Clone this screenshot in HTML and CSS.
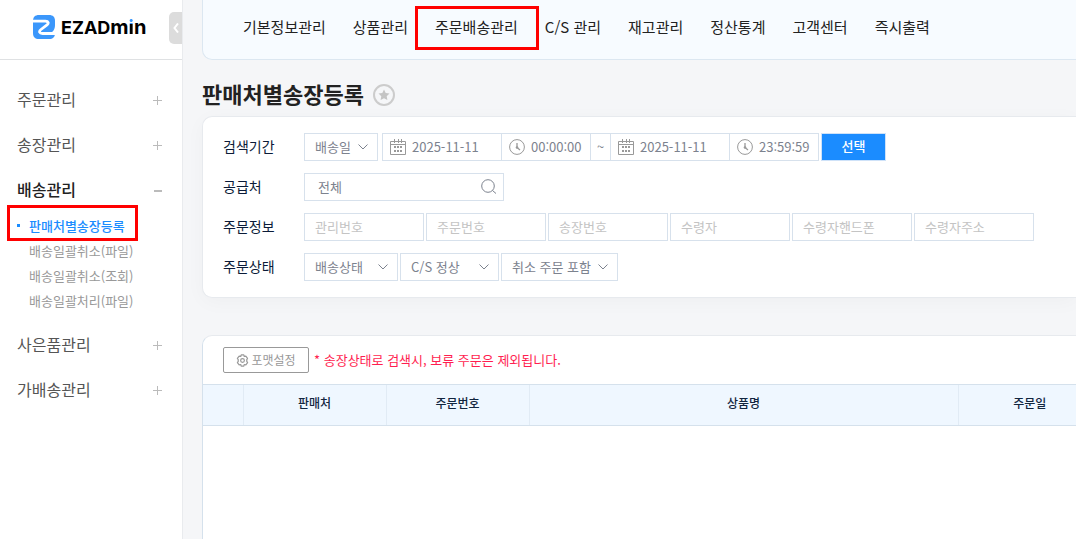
FILE: index.html
```html
<!DOCTYPE html>
<html lang="ko">
<head>
<meta charset="utf-8">
<meta name="viewport" content="width=device-width, initial-scale=1">
<title>판매처별송장등록 - EZADMIN</title>
<link rel="stylesheet" href="styles.css">
</head>
<body>
<svg class="sprite" aria-hidden="true">
  <symbol id="chevron" viewBox="0 0 10 6"><path d="M.5 .5 5 5 9.500 .5" fill="none" stroke="currentColor"/></symbol>
  <symbol id="calendar" viewBox="0 0 16 16">
    <path d="M.5 2.500h15v13H.5zM.5 5.500h15M4.500 0v4M8.500 0v4M11.500 0v4" fill="none" stroke="currentColor"/>
    <path d="M4 7h2v2H4zM7 7h2v2H7zM10 7h2v2h-2zM4 11h2v2H4zM7 11h2v2H7zM10 11h2v2h-2z" fill="currentColor"/>
  </symbol>
  <symbol id="clock" viewBox="0 0 16 16">
    <circle cx="8" cy="8" r="7.400" fill="none" stroke="currentColor"/>
    <path d="M8 4v4.500l3 2.500" fill="none" stroke="currentColor" stroke-width="1.300"/><circle cx="8" cy="8.500" r="1.300" fill="currentColor"/>
  </symbol>
</svg>
<div class="shell">
  <aside class="sidebar">
    <div class="brand">
      <a class="logo" href="#">
        <svg class="logo-mark" viewBox="0 0 22 24" aria-hidden="true">
          <path d="M6 0h10c4 0 6 2 6 6v4c0 4-2 8-6 8h6c0 4-2 6-6 6H6c-4 0-6-2-6-6V6c0-4 2-6 6-6z" fill="#3b97fb"/>
          <path d="M-1 6.200h13.500c3 0 3.500 2 1.500 3.700L8 14.500c-2.500 2-1.500 4 1.500 4H23" fill="none" stroke="#fff" stroke-width="2.800"/>
        </svg>
        <span class="logo-text">EZAD<span class="logo-small">m<span class="logo-dot">i</span>n</span></span>
      </a>
      <button class="collapse" type="button" aria-label="메뉴 접기">
        <svg viewBox="0 0 6 10" aria-hidden="true"><path d="M5 .5 1.500 5 5 9.500" fill="none" stroke="#fff" stroke-width="2"/></svg>
      </button>
    </div>
    <nav aria-label="사이드 메뉴">
      <ul class="menu">
        <li><a class="menu-link" href="#">주문관리<span class="sign"></span></a></li>
        <li><a class="menu-link" href="#">송장관리<span class="sign"></span></a></li>
        <li><a class="menu-link open" href="#">배송관리<span class="sign"></span></a>
          <ul class="submenu">
            <li class="current"><a href="#">판매처별송장등록</a></li>
            <li><a href="#">배송일괄취소(파일)</a></li>
            <li><a href="#">배송일괄취소(조회)</a></li>
            <li><a href="#">배송일괄처리(파일)</a></li>
          </ul>
        </li>
        <li><a class="menu-link" href="#">사은품관리<span class="sign"></span></a></li>
        <li><a class="menu-link" href="#">가배송관리<span class="sign"></span></a></li>
      </ul>
    </nav>
  </aside>
  <div class="content">
    <nav class="topnav" aria-label="주 메뉴">
      <a href="#">기본정보관리</a>
      <a href="#">상품관리</a>
      <a class="marked" href="#">주문배송관리</a>
      <a href="#">C/S 관리</a>
      <a href="#">재고관리</a>
      <a href="#">정산통계</a>
      <a href="#">고객센터</a>
      <a href="#">즉시출력</a>
    </nav>
    <main class="page">
      <div class="heading">
        <h1>판매처별송장등록</h1>
        <button class="star" type="button" aria-label="즐겨찾기">
          <svg viewBox="0 0 22 22" aria-hidden="true">
            <circle cx="11" cy="11" r="10" fill="none" stroke="#ccc" stroke-width="2"/>
            <path d="m11 5.500 1.700 3.500 3.800.5-2.800 2.700.7 3.900-3.400-1.900-3.400 1.900.7-3.900-2.800-2.700 3.800-.5z" fill="#c4c4c4"/>
          </svg>
        </button>
      </div>
      <form class="card search">
        <div class="row">
          <label class="row-label" for="date-type">검색기간</label>
          <div class="period">
            <span class="select select-s"><select id="date-type"><option>배송일</option></select><svg aria-hidden="true"><use href="#chevron"/></svg></span>
            <div class="range">
              <label class="stamp date"><svg aria-hidden="true"><use href="#calendar"/></svg><input type="text" value="2025-11-11" aria-label="시작일"></label>
              <label class="stamp time"><svg aria-hidden="true"><use href="#clock"/></svg><input type="text" value="00:00:00" aria-label="시작 시각"></label>
              <span class="tilde">~</span>
              <label class="stamp date"><svg aria-hidden="true"><use href="#calendar"/></svg><input type="text" value="2025-11-11" aria-label="종료일"></label>
              <label class="stamp time"><svg aria-hidden="true"><use href="#clock"/></svg><input type="text" value="23:59:59" aria-label="종료 시각"></label>
            </div>
            <button class="choose" type="button">선택</button>
          </div>
        </div>
        <div class="row">
          <label class="row-label" for="supplier">공급처</label>
          <div class="supplier">
            <input id="supplier" type="text" value="전체">
            <button type="button" aria-label="공급처 찾기"><svg viewBox="0 0 16 16" aria-hidden="true"><circle cx="7" cy="7" r="6.300" fill="none" stroke="currentColor"/><path d="m11.500 11.500 3.500 3" fill="none" stroke="currentColor"/></svg></button>
          </div>
        </div>
        <div class="row">
          <span class="row-label">주문정보</span>
          <div class="fields">
            <input class="field" type="text" placeholder="관리번호" aria-label="관리번호">
            <input class="field" type="text" placeholder="주문번호" aria-label="주문번호">
            <input class="field" type="text" placeholder="송장번호" aria-label="송장번호">
            <input class="field" type="text" placeholder="수령자" aria-label="수령자">
            <input class="field" type="text" placeholder="수령자핸드폰" aria-label="수령자핸드폰">
            <input class="field" type="text" placeholder="수령자주소" aria-label="수령자주소">
          </div>
        </div>
        <div class="row">
          <label class="row-label" for="ship-state">주문상태</label>
          <div class="fields">
            <span class="select select-m"><select id="ship-state"><option>배송상태</option></select><svg aria-hidden="true"><use href="#chevron"/></svg></span>
            <span class="select select-l"><select aria-label="C/S 상태"><option>C/S 정상</option></select><svg aria-hidden="true"><use href="#chevron"/></svg></span>
            <span class="select select-xl"><select aria-label="취소 주문"><option>취소 주문 포함</option></select><svg aria-hidden="true"><use href="#chevron"/></svg></span>
          </div>
        </div>
      </form>
      <section class="card results">
        <div class="toolbar">
          <button class="format" type="button">
            <svg viewBox="0 0 14 14" aria-hidden="true">
              <path d="M5.600 1h2.800l.5 1.700 1.700-.4 1.800 2.400L11.600 6v2l.9 1.300-1.900 2.400-1.700-.4L8.400 13H5.600l-.5-1.700-1.700.4-1.900-2.400.9-1.300V6l-.9-1.300 1.900-2.400 1.700.4z" fill="none" stroke="currentColor" stroke-width="1.300" stroke-linejoin="round"/>
              <circle cx="7" cy="7" r="2" fill="none" stroke="currentColor" stroke-width="1.300"/>
            </svg>포맷설정</button>
          <p class="notice">* 송장상태로 검색시, 보류 주문은 제외됩니다.</p>
        </div>
        <div class="table-wrap">
          <table class="grid">
            <colgroup><col class="c-check"><col class="c-std"><col class="c-std"><col class="c-name"><col class="c-std"></colgroup>
            <thead><tr><th></th><th>판매처</th><th>주문번호</th><th>상품명</th><th>주문일</th></tr></thead>
          </table>
        </div>
      </section>
    </main>
  </div>
</div>
</body>
</html>
```

FILE: styles.css
```css
*, *::before, *::after { box-sizing: border-box; }
body {
  margin: 0;
  background: #f5f6f8;
  color: #222;
  font: 13px/20px "Noto Sans CJK KR", "Noto Sans", sans-serif;
}
a { color: inherit; text-decoration: none; }
ul { list-style: none; margin: 0; padding: 0; }
button, input, select { font: inherit; color: inherit; margin: 0; border-radius: 0; }
button { padding: 0; border: 0; background: none; cursor: pointer; }
svg { display: block; flex: none; }
.sprite { display: none; }

.shell { display: flex; min-height: 100vh; }
.sidebar { flex: none; width: 183px; background: #fff; border-right: 1px solid #e9ebee; }
.brand { display: flex; justify-content: space-between; height: 60px; padding: 12px 0 0 33px; border-bottom: 1px solid #dfe1e3; }
.logo { display: flex; gap: 6px; height: 30px; align-items: center; color: #000; }
.logo-mark { width: 22px; height: 24px; }
.logo-text { font: 700 18px/24px Inter, sans-serif; }
.logo-small { font-size: 20px; }
.logo-dot { color: transparent; background: linear-gradient(#3b97fb 9px, #000 9px); -webkit-background-clip: text; background-clip: text; }
.collapse { display: grid; place-items: center; width: 13px; height: 32px; background: #dcdcdc; border-radius: 5px 0 0 5px; }
.collapse svg { width: 6px; height: 10px; }

.menu { padding-top: 18px; }
.menu-link { display: flex; align-items: center; justify-content: space-between; height: 45px; padding: 0 20px 3px 17px; color: #555; font-size: 16px; }
.menu-link.open { color: #222; font-weight: 500; }
.sign { width: 9px; height: 9px; margin-top: 3px; background: linear-gradient(#bbb, #bbb) center / 9px 1px no-repeat, linear-gradient(#bbb, #bbb) center / 1px 9px no-repeat; }
.open .sign { height: 2px; width: 8px; background: #bbb; }
.submenu { padding: 0 0 10px 29px; color: #999; line-height: 25px; }
.submenu li { position: relative; }
.submenu .current { color: #1b8cff; font-weight: 500; }
.current::before { content: ""; position: absolute; left: -12px; top: 11px; width: 3px; height: 3px; background: #1b8cff; }
.current::after { content: ""; position: absolute; left: -22px; top: -8px; width: 131px; height: 36px; border: 3px solid #f00; }

.content { flex: 1; min-width: 0; display: flex; flex-direction: column; padding-left: 19px; }
.topnav { display: flex; gap: 27px; height: 60px; padding: 15px 0 0 40px; overflow: hidden; white-space: nowrap; background: #f7fbff; border: solid #dce7f1; border-width: 0 0 1px 1px; border-radius: 0 0 0 10px; font-size: 15px; line-height: 24px; }
.marked { position: relative; }
.marked::after { content: ""; position: absolute; left: -20px; top: -9px; width: 124px; height: 44px; border: 3px solid #f00; }
.page { flex: 1; display: flex; flex-direction: column; }
.heading { display: flex; align-items: center; gap: 9px; height: 56px; padding-top: 13px; }
h1 { margin: 0; padding-bottom: 4px; font-size: 22px; line-height: 32px; }
.star svg { width: 22px; height: 22px; }

.card { background: #fff; border: 1px solid #e7eaee; border-right: 0; border-radius: 10px 0 0 0; }
.search { display: grid; gap: 12px; margin-bottom: 37px; padding: 16px 0 16px 20px; border-radius: 10px 0 0 10px; box-shadow: 0 4px 20px rgba(0, 0, 0, .03); color: #7c828e; }
.row { display: flex; align-items: center; height: 28px; white-space: nowrap; }
.row-label { flex: none; width: 81px; padding-bottom: 2px; color: #0b1b38; font-size: 14px; }
.period, .fields { display: flex; gap: 2px; }
.range { display: flex; margin-left: 2px; }
.select { display: grid; align-items: center; height: 28px; }
.select select, .select svg { grid-area: 1 / 1; }
.select select { appearance: none; width: 100%; height: 28px; padding: 0 10px; border: 1px solid #d7e1ec; background: #fff; }
.select svg { width: 10px; height: 6px; justify-self: end; margin-right: 10px; pointer-events: none; }
.select-s { width: 74px; }
.select-m { width: 94px; }
.select-l { width: 99px; }
.select-xl { width: 117px; }
.stamp, .tilde { display: flex; align-items: center; height: 28px; border: 1px solid #d7e1ec; }
.range > * + * { margin-left: -1px; }
.stamp { gap: 6px; padding-left: 7px; }
.stamp svg { width: 16px; height: 16px; color: #999; }
.stamp input { min-width: 0; flex: 1; padding: 0; border: 0; background: none; }
.date { width: 120px; }
.time { width: 90px; }
.tilde { width: 21px; justify-content: center; }
.choose { width: 65px; height: 28px; padding-bottom: 2px; background: #1b8cff; border: 1px solid #cfe2f8; color: #fff; font-weight: 500; }
.supplier { display: flex; width: 200px; height: 28px; padding: 0 6px 0 13px; border: 1px solid #d7e1ec; }
.supplier input { flex: 1; min-width: 0; padding: 0; border: 0; }
.supplier svg { width: 16px; height: 16px; }
.field { width: 120px; height: 28px; padding: 0 10px 2px; border: 1px solid #d7e1ec; background: #fff; }
.field::placeholder { color: #c4c4c4; opacity: 1; }

.results { flex: 1; border-bottom: 0; border-left-color: #d5e1ec; }
.toolbar { display: flex; align-items: center; gap: 5px; height: 48px; padding-left: 20px; white-space: nowrap; }
.format { display: flex; align-items: center; justify-content: center; gap: 2px; width: 86px; height: 26px; border: 1px solid #999; border-radius: 2px; color: #999; font-size: 12px; }
.format svg { width: 13px; height: 13px; }
.notice { margin: 0; color: #ff1e50; }
.table-wrap { overflow: hidden; }
.grid { width: 898px; table-layout: fixed; border-collapse: collapse; }
.c-check { width: 40px; }
.c-std { width: 143px; }
.c-name { width: 429px; }
.grid th { height: 41px; padding: 0 0 4px; background: #eff7ff; border: solid #d5e1ec; border-width: 1px 0; color: #12263f; font-size: 12px; font-weight: 500; }
.grid th + th { border-left: 1px solid #e1ebf5; }
```
